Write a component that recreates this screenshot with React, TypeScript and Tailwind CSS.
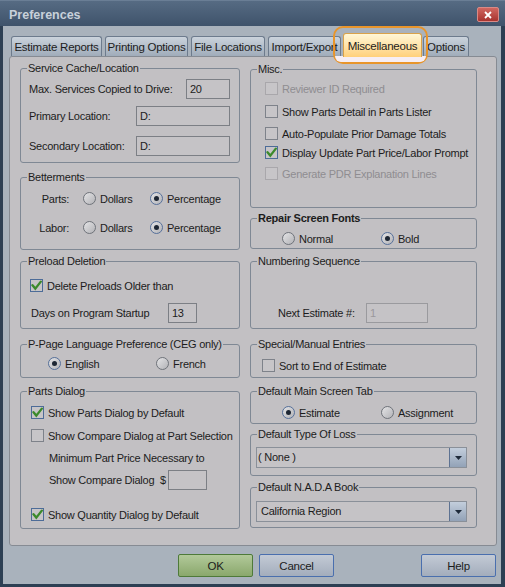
import * as React from "react";

type GroupProps = {
  title: string;
  bold?: boolean;
  className?: string;
  children?: React.ReactNode;
};

function Group({ title, bold, className = "", children }: GroupProps) {
  return (
    <fieldset className={`min-w-0 rounded-[3px] border border-[#7f8894] ${className}`}>
      <legend className={`ml-[6px] px-[1px] leading-[13px] ${bold ? "font-bold" : ""}`}>{title}</legend>
      {children}
    </fieldset>
  );
}

function Check({ checked, disabled }: { checked?: boolean; disabled?: boolean }) {
  const border = checked ? "border-[#4d6c98]" : disabled ? "border-[#a9a7ab]" : "border-[#7e828a]";
  return (
    <span className={`flex h-[13px] w-[13px] shrink-0 items-center justify-center border bg-[#c7c5c8] ${border}`}>
      {checked && (
        <svg viewBox="0 0 11 11" className="h-[11px] w-[11px]">
          <path d="M1.5 5.2 L4.3 8.6 L9.8 1.6" stroke="#3c8a2c" strokeWidth="2.3" fill="none" strokeLinecap="round" />
        </svg>
      )}
    </span>
  );
}

function CheckRow({ label, checked, disabled, className = "" }: { label: string; checked?: boolean; disabled?: boolean; className?: string }) {
  return (
    <div className={`flex h-[13px] items-center gap-[4px] ${className}`}>
      <Check checked={checked} disabled={disabled} />
      <span className={`whitespace-nowrap ${disabled ? "text-[#8f8d91]" : ""}`}>{label}</span>
    </div>
  );
}

function Radio({ checked }: { checked?: boolean }) {
  return (
    <span
      className={`flex h-[13px] w-[13px] shrink-0 items-center justify-center rounded-full border bg-gradient-to-br from-[#e4e4e6] to-[#b3b3b7] ${
        checked ? "border-[#56709a]" : "border-[#6f737a]"
      }`}
    >
      {checked && <span className="h-[5px] w-[5px] rounded-full bg-[#1d2633]" />}
    </span>
  );
}

function RadioItem({ label, checked, className = "" }: { label: string; checked?: boolean; className?: string }) {
  return (
    <div className={`flex items-center gap-[4px] ${className}`}>
      <Radio checked={checked} />
      <span className="whitespace-nowrap">{label}</span>
    </div>
  );
}

function TextBox({ value, className = "", disabled }: { value?: string; className?: string; disabled?: boolean }) {
  return (
    <div
      className={`h-[20px] shrink-0 border bg-[#c5c3c6] pl-[3px] leading-[18px] ${
        disabled ? "border-[#9a9a9e] text-[#9a989c]" : "border-[#7c7f85]"
      } ${className}`}
    >
      {value}
    </div>
  );
}

function Select({ value, pad }: { value: string; pad: string }) {
  return (
    <div className="flex h-[21px] w-[211px] border border-[#8a9099] bg-[#c5c3c6]">
      <span className={`flex-1 leading-[19px] ${pad}`}>{value}</span>
      <span className="flex w-[17px] items-center justify-center border-l border-[#5d7292] bg-gradient-to-b from-[#c3cedc] to-[#92a2b7]">
        <svg viewBox="0 0 7 4" className="h-[4px] w-[7px]">
          <path d="M0 0 H7 L3.5 4 Z" fill="#1e2a3a" />
        </svg>
      </span>
    </div>
  );
}

function Tab({ label, className = "" }: { label: string; className?: string }) {
  return (
    <div
      className={`flex h-[20px] items-center justify-center whitespace-nowrap rounded-t-[3px] border border-b-0 border-[#6d7b8d] bg-gradient-to-b from-[#cbd3dc] to-[#a0acba] text-[11.5px] leading-[14px] text-[#1c1c1c] ${className}`}
    >
      {label}
    </div>
  );
}

function Button({ label, ok, className = "" }: { label: string; ok?: boolean; className?: string }) {
  return (
    <div
      className={`flex h-[23px] w-[75px] items-center justify-center rounded-[2px] border text-[11.5px] ${
        ok
          ? "border-[#4e7a39] bg-gradient-to-b from-[#b2c99a] to-[#8aa86c]"
          : "border-[#4a6fae] bg-gradient-to-b from-[#c3cad5] to-[#a3adbc]"
      } ${className}`}
    >
      {label}
    </div>
  );
}

export default function App() {
  return (
    <div className="relative flex h-[587px] w-[505px] flex-col whitespace-nowrap bg-[#2d3f53] font-['Liberation_Sans',Arial,sans-serif] text-[11px] leading-[14px] tracking-[-0.25px] text-[#1c1c1c]">
      {/* title bar */}
      <div className="flex h-[26px] shrink-0 items-start border-t border-[#6a7e95] bg-gradient-to-b from-[#566b83] to-[#3f536b]">
        <span className="ml-[9px] mt-[7px] text-[12.5px] font-bold leading-[15px] tracking-normal text-[#c8d0da]">Preferences</span>
        <span className="ml-auto mr-[6px] mt-[6px] flex h-[15px] w-[22px] items-center justify-center rounded-[2px] border border-[#d98a86] bg-gradient-to-b from-[#d06660] to-[#a8332f]">
          <svg viewBox="0 0 8 8" className="h-[8px] w-[8px]">
            <path d="M1 1 L7 7 M7 1 L1 7" stroke="#ffffff" strokeWidth="1.8" />
          </svg>
        </span>
      </div>

      {/* body */}
      <div className="mb-[3px] ml-[3px] mr-[4px] flex flex-1 flex-col bg-[#a9b2bc] pl-[6px] pr-[4px] pt-[7px]">
        {/* tabs */}
        <div className="relative flex h-[23px] items-end">
          <Tab label="Estimate Reports" className="ml-[2px] w-[91px]" />
          <Tab label="Printing Options" className="ml-[3px] w-[83px]" />
          <Tab label="File Locations" className="ml-[3px] w-[74px]" />
          <Tab label="Import/Export" className="ml-[3px] w-[73px]" />
          <div className="relative z-20 mb-[-1px] ml-[2px] flex h-[24px] w-[79px] items-center justify-center rounded-t-[3px] border border-b-0 border-[#d9a24a] bg-gradient-to-b from-[#fff7d6] to-[#ffd07a] text-[11.5px]">
            Miscellaneous
          </div>
          <Tab label="Options" className="ml-[1px] w-[46px]" />
        </div>

        {/* tab panel */}
        <div className="flex h-[490px] w-[488px] gap-[10px] rounded-[3px] border border-[#868b93] bg-[#c2c0c3] pl-[10px] pt-[5px]">
          {/* left column */}
          <div className="flex w-[220px] flex-col">
            <Group title="Service Cache/Location" className="h-[101px]">
              <div className="pl-[8px] pr-[9px]">
                <div className="mt-[4px] flex h-[20px] items-center justify-between">
                  <span>Max. Services Copied to Drive:</span>
                  <TextBox value="20" className="w-[44px]" />
                </div>
                <div className="mt-[7px] flex h-[20px] items-center justify-between">
                  <span>Primary Location:</span>
                  <TextBox value="D:" className="w-[94px]" />
                </div>
                <div className="mt-[10px] flex h-[20px] items-center justify-between">
                  <span>Secondary Location:</span>
                  <TextBox value="D:" className="w-[94px]" />
                </div>
              </div>
            </Group>

            <Group title="Betterments" className="mt-[8px] h-[79px]">
              <div className="pl-[8px]">
                <div className="mt-[8px] flex h-[13px] items-center">
                  <span className="w-[40px] text-right">Parts:</span>
                  <RadioItem label="Dollars" className="ml-[14px] w-[67px]" />
                  <RadioItem label="Percentage" checked />
                </div>
                <div className="mt-[16px] flex h-[13px] items-center">
                  <span className="w-[40px] text-right">Labor:</span>
                  <RadioItem label="Dollars" className="ml-[14px] w-[67px]" />
                  <RadioItem label="Percentage" checked />
                </div>
              </div>
            </Group>

            <Group title="Preload Deletion" className="mt-[5px] h-[74px]">
              <CheckRow label="Delete Preloads Older than" checked className="ml-[9px] mt-[11px]" />
              <div className="ml-[10px] mt-[11px] flex h-[20px] items-center">
                <span className="w-[137px]">Days on Program Startup</span>
                <TextBox value="13" className="w-[29px]" />
              </div>
            </Group>

            <Group title="P-Page Language Preference (CEG only)" className="mt-[9px] h-[40px]">
              <div className="ml-[27px] mt-[6px] flex h-[13px] items-center">
                <RadioItem label="English" checked className="w-[108px]" />
                <RadioItem label="French" />
              </div>
            </Group>

            <Group title="Parts Dialog" className="mt-[7px] h-[144px]">
              <CheckRow label="Show Parts Dialog by Default" checked className="ml-[10px] mt-[8px]" />
              <CheckRow label="Show Compare Dialog at Part Selection" className="ml-[10px] mt-[10px]" />
              <div className="ml-[28px] mt-[9px] leading-[14px]">Minimum Part Price Necessary to</div>
              <div className="ml-[28px] mt-[5px] flex h-[20px] items-center">
                <span className="w-[111px]">Show Compare Dialog</span>
                <span className="w-[8px]">$</span>
                <TextBox className="w-[39px]" />
              </div>
              <CheckRow label="Show Quantity Dialog by Default" checked className="ml-[10px] mt-[18px]" />
            </Group>
          </div>

          {/* right column */}
          <div className="flex w-[227px] flex-col">
            <Group title="Misc." className="mt-[1px] h-[145px]">
              <CheckRow label="Reviewer ID Required" disabled className="ml-[14px] mt-[6px]" />
              <CheckRow label="Show Parts Detail in Parts Lister" className="ml-[14px] mt-[10px]" />
              <CheckRow label="Auto-Populate Prior Damage Totals" className="ml-[14px] mt-[9px]" />
              <CheckRow label="Display Update Part Price/Labor Prompt" checked className="ml-[14px] mt-[6px]" />
              <CheckRow label="Generate PDR Explanation Lines" disabled className="ml-[14px] mt-[8px]" />
            </Group>

            <Group title="Repair Screen Fonts" bold className="mt-[4px] h-[37px]">
              <div className="ml-[31px] mt-[7px] flex h-[13px] items-center">
                <RadioItem label="Normal" className="w-[99px]" />
                <RadioItem label="Bold" checked />
              </div>
            </Group>

            <Group title="Numbering Sequence" className="mt-[6px] h-[74px]">
              <div className="ml-[27px] mt-[35px] flex h-[20px] items-center">
                <span className="w-[88px]">Next Estimate #:</span>
                <TextBox value="1" disabled className="w-[62px]" />
              </div>
            </Group>

            <Group title="Special/Manual Entries" className="mt-[9px] h-[40px]">
              <CheckRow label="Sort to End of Estimate" className="ml-[11px] mt-[8px]" />
            </Group>

            <Group title="Default Main Screen Tab" className="mt-[7px] h-[39px]">
              <div className="ml-[31px] mt-[8px] flex h-[13px] items-center">
                <RadioItem label="Estimate" checked className="w-[99px]" />
                <RadioItem label="Assignment" />
              </div>
            </Group>

            <Group title="Default Type Of Loss" className="mt-[4px] h-[48px]">
              <div className="ml-[5px] mt-[6px]">
                <Select value="( None )" pad="pl-[1px]" />
              </div>
            </Group>

            <Group title="Default N.A.D.A Book" className="mt-[5px] h-[47px]">
              <div className="ml-[5px] mt-[7px]">
                <Select value="California Region" pad="pl-[4px]" />
              </div>
            </Group>
          </div>
        </div>

        {/* buttons */}
        <div className="mt-[8px] flex">
          <Button label="OK" ok className="ml-[169px]" />
          <Button label="Cancel" className="ml-[6px]" />
          <Button label="Help" className="ml-[87px]" />
        </div>
      </div>

      {/* focus ring round the selected tab */}
      <div className="pointer-events-none absolute left-[333px] top-[26px] z-10 h-[38px] w-[95px] rounded-[10px] border-2 border-[#e8952b]">
        <div className="absolute bottom-0 left-0 right-0 h-[6px] rounded-b-[8px] bg-[#f6eef4]" />
      </div>
    </div>
  );
}
